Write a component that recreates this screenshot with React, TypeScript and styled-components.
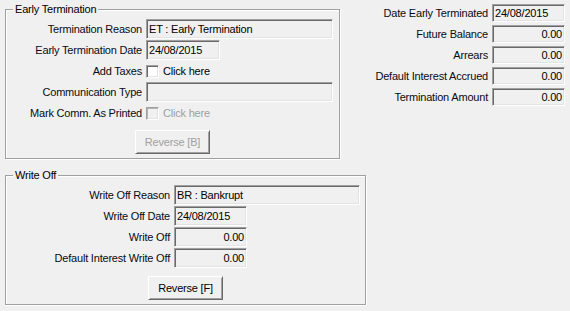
import React from "react";
import styled, { createGlobalStyle } from "styled-components";

const GlobalStyle = createGlobalStyle`
  html, body {
    margin: 0;
    padding: 0;
    background: #f0f0f0;
  }
  body {
    font-family: "Liberation Sans", Arial, sans-serif;
    font-size: 11px;
    letter-spacing: -0.2px;
    color: #000;
  }
`;

const Page = styled.div`
  display: flex;
  align-items: flex-start;
  width: 570px;
  height: 311px;
  overflow: hidden;
  background: #f0f0f0;
`;

const LeftColumn = styled.div`
  display: flex;
  flex-direction: column;
  align-items: flex-start;
  width: 361px;
  margin: 9px 0 0 5px;
`;

const GroupBox = styled.div<{ $width: number; $gapTop?: number }>`
  position: relative;
  box-sizing: border-box;
  width: ${(p) => p.$width}px;
  margin-top: ${(p) => p.$gapTop ?? 0}px;
  border: 1px solid #a0a0a0;
  box-shadow: inset 1px 1px 0 #fff, 1px 1px 0 #fff;
  padding: 9px 0 4px 0;
`;

const GroupTitle = styled.span`
  position: absolute;
  top: -7px;
  left: 7px;
  padding: 0 2px;
  line-height: 13px;
  background: #f0f0f0;
  white-space: nowrap;
`;

const FormGrid = styled.div<{ $labelWidth: number }>`
  display: grid;
  grid-template-columns: ${(p) => p.$labelWidth}px auto;
  column-gap: 4px;
  row-gap: 1px;
  align-items: center;
`;

const Label = styled.span`
  text-align: right;
  white-space: nowrap;
  line-height: 13px;
  color: #0a0a14;
`;

const TextBox = styled.div<{ $width: number; $height?: number; $align?: "left" | "right" }>`
  box-sizing: border-box;
  width: ${(p) => p.$width}px;
  height: ${(p) => p.$height ?? 20}px;
  display: flex;
  align-items: center;
  justify-content: ${(p) => (p.$align === "right" ? "flex-end" : "flex-start")};
  padding: 0 2px 0 2px;
  background: #f0f0f0;
  border-top: 1px solid #a0a0a0;
  border-left: 1px solid #a0a0a0;
  border-bottom: 1px solid #fff;
  border-right: 1px solid #fff;
  box-shadow: inset 1px 1px 0 #696969, inset -1px -1px 0 #e3e3e3;
  white-space: nowrap;
  overflow: hidden;
  line-height: 13px;
`;

const CheckRow = styled.div`
  display: flex;
  align-items: center;
  gap: 4px;
  height: 20px;
`;

const CheckBox = styled.span<{ $disabled?: boolean }>`
  box-sizing: border-box;
  width: 13px;
  height: 13px;
  background: ${(p) => (p.$disabled ? "#f0f0f0" : "#fff")};
  border-top: 1px solid #a0a0a0;
  border-left: 1px solid #a0a0a0;
  border-bottom: 1px solid #fff;
  border-right: 1px solid #fff;
  box-shadow: ${(p) =>
    p.$disabled
      ? "inset 1px 1px 0 #b4b4b4, inset -1px -1px 0 #e3e3e3"
      : "inset 1px 1px 0 #696969, inset -1px -1px 0 #e3e3e3"};
`;

const CheckText = styled.span<{ $disabled?: boolean }>`
  color: ${(p) => (p.$disabled ? "#a0a0a0" : "#000")};
  line-height: 13px;
  white-space: nowrap;
`;

const ButtonRow = styled.div<{ $gapTop: number }>`
  display: flex;
  justify-content: center;
  margin-top: ${(p) => p.$gapTop}px;
`;

const Button = styled.button<{ $disabled?: boolean }>`
  box-sizing: border-box;
  width: 75px;
  height: 24px;
  padding: 0;
  margin: 0;
  font: inherit;
  letter-spacing: inherit;
  color: ${(p) => (p.$disabled ? "#a0a0a0" : "#000")};
  background: #f0f0f0;
  border-top: 1px solid #fff;
  border-left: 1px solid #fff;
  border-bottom: 1px solid #696969;
  border-right: 1px solid #696969;
  box-shadow: inset 1px 1px 0 #f0f0f0, inset -1px -1px 0 #a0a0a0;
  cursor: default;
`;

const RightPanel = styled.div`
  display: grid;
  grid-template-columns: 122px 73px;
  column-gap: 4px;
  row-gap: 3px;
  align-items: center;
  margin-top: 4px;
`;

export default function App() {
  return (
    <>
      <GlobalStyle />
      <Page>
        <LeftColumn>
          <GroupBox $width={335}>
            <GroupTitle>Early Termination</GroupTitle>
            <FormGrid $labelWidth={136}>
              <Label>Termination Reason</Label>
              <TextBox $width={187}>ET : Early Termination</TextBox>
              <Label>Early Termination Date</Label>
              <TextBox $width={74}>24/08/2015</TextBox>
              <Label>Add Taxes</Label>
              <CheckRow>
                <CheckBox />
                <CheckText>Click here</CheckText>
              </CheckRow>
              <Label>Communication Type</Label>
              <TextBox $width={187} />
              <Label>Mark Comm. As Printed</Label>
              <CheckRow>
                <CheckBox $disabled />
                <CheckText $disabled>Click here</CheckText>
              </CheckRow>
            </FormGrid>
            <ButtonRow $gapTop={7}>
              <Button $disabled>Reverse [B]</Button>
            </ButtonRow>
          </GroupBox>

          <GroupBox $width={361} $gapTop={16}>
            <GroupTitle>Write Off</GroupTitle>
            <FormGrid $labelWidth={164}>
              <Label>Write Off Reason</Label>
              <TextBox $width={186}>BR : Bankrupt</TextBox>
              <Label>Write Off Date</Label>
              <TextBox $width={73}>24/08/2015</TextBox>
              <Label>Write Off</Label>
              <TextBox $width={73} $align="right">0.00</TextBox>
              <Label>Default Interest Write Off</Label>
              <TextBox $width={73} $align="right">0.00</TextBox>
            </FormGrid>
            <ButtonRow $gapTop={8}>
              <Button>Reverse [F]</Button>
            </ButtonRow>
          </GroupBox>
        </LeftColumn>

        <RightPanel>
          <Label>Date Early Terminated</Label>
          <TextBox $width={73} $height={18}>24/08/2015</TextBox>
          <Label>Future Balance</Label>
          <TextBox $width={73} $height={18} $align="right">0.00</TextBox>
          <Label>Arrears</Label>
          <TextBox $width={73} $height={18} $align="right">0.00</TextBox>
          <Label>Default Interest Accrued</Label>
          <TextBox $width={73} $height={18} $align="right">0.00</TextBox>
          <Label>Termination Amount</Label>
          <TextBox $width={73} $height={18} $align="right">0.00</TextBox>
        </RightPanel>
      </Page>
    </>
  );
}
